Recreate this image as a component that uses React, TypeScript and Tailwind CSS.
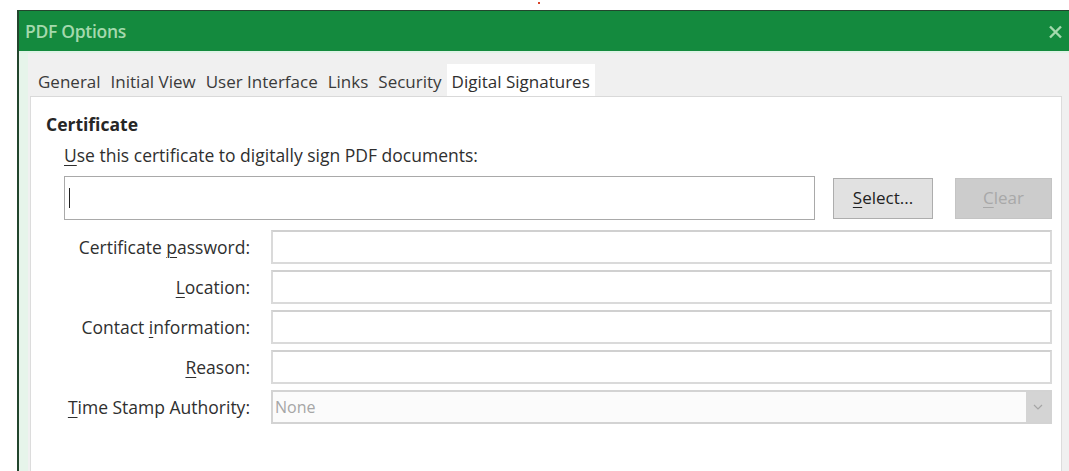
import type { ReactNode } from "react";

const TABS = ["General", "Initial View", "User Interface", "Links", "Security", "Digital Signatures"];

// label text split around its access key
const FIELDS: { pre: string; key: string; post: string }[] = [
  { pre: "Certificate ", key: "p", post: "assword:" },
  { pre: "", key: "L", post: "ocation:" },
  { pre: "Contact ", key: "i", post: "nformation:" },
  { pre: "", key: "R", post: "eason:" },
];

const Accel = ({ pre = "", k, post = "" }: { pre?: string; k: string; post?: string }) => (
  <>
    {pre}
    <span className="underline underline-offset-[3px] decoration-1">{k}</span>
    {post}
  </>
);

const Row = ({ label, children }: { label: ReactNode; children: ReactNode }) => (
  <div className="flex h-[34px] items-center">
    <div className="w-[204px] shrink-0 whitespace-nowrap text-right">{label}</div>
    <div className="ml-[21px] h-full flex-1">{children}</div>
  </div>
);

const TextField = () => (
  <div className="h-full w-full border-2 border-[#dadada] border-t-[#d0d0d0] bg-white" />
);

export default function App() {
  return (
    <div className="relative h-[471px] w-[1069px] overflow-hidden bg-white font-['Open_Sans',sans-serif] text-[17.5px] leading-[22px] text-[#2f2f2f]">
      <span className="absolute left-[538px] top-[2px] h-[2px] w-[2px] bg-[#d9442a]" />

      <div className="ml-[17px] mt-[10px] flex h-[461px] w-[1060px] flex-col border-l-2 border-t border-[#22452d]">
        {/* title bar */}
        <div className="flex h-[40px] shrink-0 items-center justify-between bg-[#148a3e] pl-[6px] pr-[14px]">
          <span className="text-[17.5px] font-semibold tracking-[-0.3px] text-[#a4d9ad]">PDF Options</span>
          <svg width="15" height="14" viewBox="0 0 15 14" className="mt-[1px]">
            <path d="M2 1.5 13 12.5M13 1.5 2 12.5" stroke="#a4d9ad" strokeWidth="2.4" />
          </svg>
        </div>

        <div className="flex flex-1 border-t-2 border-[#dff3e6] bg-[#f0f0f0]">
          <div className="w-[9px] shrink-0 bg-[#e6f4ea]" />
          <div className="flex flex-1 flex-col pl-[2px] pr-[15px] pt-[11px]">
            {/* tabs */}
            <div className="flex h-[33px] shrink-0 items-stretch border-b border-[#d9d9d9] pl-[3px] text-[17px]">
              {TABS.map((t, i) => {
                const active = i === TABS.length - 1;
                return (
                  <div
                    key={t}
                    className={
                      active
                        ? "bg-white px-[5px] pt-[7px] text-[#2f2f2f]"
                        : "px-[5px] pt-[7px] text-[#3a3a3a]"
                    }
                  >
                    {t}
                  </div>
                );
              })}
            </div>

            {/* page */}
            <div className="flex-1 border-x border-[#dcdcdc] bg-white pl-[15px] pr-[9px] pt-[16px]">
              <div className="font-bold text-[#262626]">Certificate</div>
              <div className="ml-[18px] mt-[9px]">
                <Accel k="U" post="se this certificate to digitally sign PDF documents:" />
              </div>

              <div className="ml-[18px] mt-[10px] flex items-center">
                <div className="flex h-[44px] w-[751px] items-center border border-[#a9a9a9] bg-white pl-[4px]">
                  <span className="h-[20px] w-[1px] bg-[#222]" />
                </div>
                <button className="ml-[18px] h-[41px] w-[100px] border border-[#adadad] bg-[#e1e1e1] text-[17px] text-[#222]">
                  <Accel k="S" post="elect..." />
                </button>
                <button className="ml-[22px] h-[41px] w-[97px] border border-[#c4c4c4] bg-[#cccccc] text-[17px] text-[#a8a8a8]">
                  <Accel k="C" post="lear" />
                </button>
              </div>

              <div className="mt-[10px] flex flex-col gap-[6px]">
                {FIELDS.map((f) => (
                  <Row key={f.post} label={<Accel pre={f.pre} k={f.key} post={f.post} />}>
                    <TextField />
                  </Row>
                ))}
                <Row label={<Accel k="T" post="ime Stamp Authority:" />}>
                  <div className="flex h-full w-full items-center border-2 border-[#d3d3d3] bg-[#fbfbfb]">
                    <span className="ml-[2px] flex-1 text-[16px] text-[#a6a6a6]">None</span>
                    <div className="flex h-full w-[24px] items-center justify-center bg-[#d4d4d4]">
                      <svg width="10" height="6" viewBox="0 0 10 6">
                        <path d="M1 1 5 5 9 1" fill="none" stroke="#a5a5a5" strokeWidth="1.2" />
                      </svg>
                    </div>
                  </div>
                </Row>
              </div>
            </div>
          </div>
        </div>
      </div>
    </div>
  );
}
